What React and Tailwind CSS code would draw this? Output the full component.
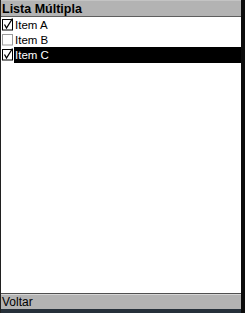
import React from "react";

function Box({ checked }) {
  return (
    <svg width="12" height="13" viewBox="0 0 12 13" className="shrink-0">
      <rect x="0.5" y="1.5" width="10" height="10.5" fill="#fff" stroke={checked ? "#000" : "#9a9a9a"} strokeWidth="1" />
      {checked && (
        <path d="M2.5 6.5 L4.5 10 L10.5 0.5" fill="none" stroke="#000" strokeWidth="1.3" />
      )}
    </svg>
  );
}

function Row({ label, checked, selected }) {
  return (
    <div className="flex h-[15px] items-center">
      <div className="flex w-[13px] items-center pl-[1px]">
        <Box checked={checked} />
      </div>
      <div
        className={
          selected
            ? "flex h-[16px] flex-1 items-center bg-black pl-[1px] pt-[2px] text-white"
            : "flex h-[15px] flex-1 items-center pl-[1px] pt-[2px] text-black"
        }
      >
        <span className="text-[11.5px] leading-none">{label}</span>
      </div>
    </div>
  );
}

export default function App() {
  return (
    <div
      className="flex h-[313px] w-[245px] bg-white"
      style={{ fontFamily: '"Liberation Sans", Arial, sans-serif' }}
    >
      <div className="flex w-[241px] flex-col border-l border-[#202020]">
        <div className="flex h-[17px] items-center border-t border-t-[#c4c4c4] border-b border-b-[#5e5e5e] bg-[#b3b3b3] pl-[1px] pt-[1px]">
          <span className="text-[12.5px] font-bold leading-none text-black">Lista Múltipla</span>
        </div>
        <div className="flex flex-1 flex-col bg-white">
          <Row label="Item A" checked />
          <Row label="Item B" />
          <Row label="Item C" checked selected />
        </div>
        <div className="flex h-[16px] items-center border-t border-t-[#505050] bg-[#b3b3b3] pl-[1px] pt-[1px] shadow-[inset_0_1px_0_#d6d6d6]">
          <span className="text-[12px] leading-none text-black">Voltar</span>
        </div>
        <div className="h-[4px] bg-[#26303a]"></div>
      </div>
      <div className="w-[4px] bg-[#0c0c0c]"></div>
    </div>
  );
}
